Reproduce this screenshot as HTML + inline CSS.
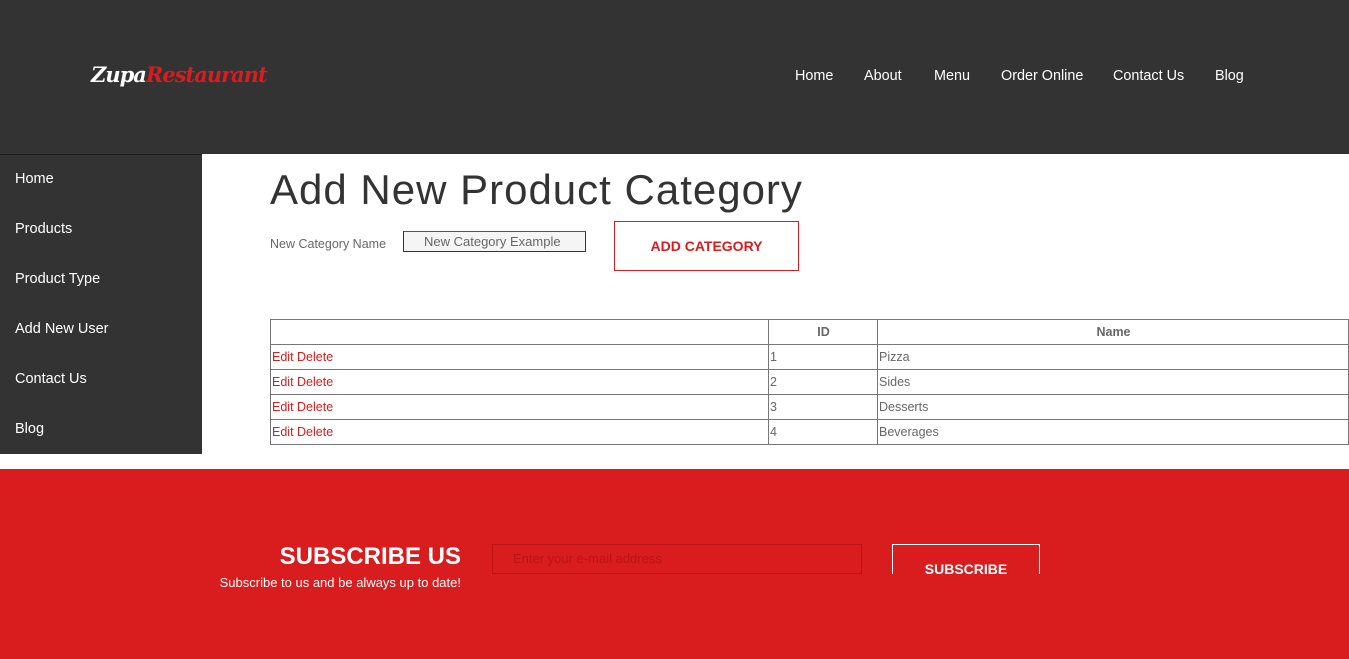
<!DOCTYPE html>
<html><head><meta charset="utf-8">
<style>
*{margin:0;padding:0;box-sizing:border-box}
body{width:1349px;height:659px;overflow:hidden;background:#fff;font-family:"Liberation Sans",sans-serif;position:relative}
.hdr{position:absolute;left:0;top:0;width:1349px;height:154px;background:#333}
.line{position:absolute;left:0;top:154px;width:202px;height:1px;background:#1e1e1e}
.logo{position:absolute;left:91px;top:62px;font-family:"DejaVu Serif",serif;font-style:italic;font-size:21px;color:#fff;letter-spacing:-1px;font-weight:bold}
.logo span{color:#d91c1e}
.nav{position:absolute;top:68px;font-size:14.4px;color:#fff}
.side{position:absolute;left:0;top:155px;width:202px;height:299px;background:#333}
.side div{position:absolute;left:15px;color:#fff;font-size:14.5px}
h1{position:absolute;left:270px;top:166px;font-weight:normal;font-size:42px;color:#333;letter-spacing:1px}
.lbl{position:absolute;left:270px;top:237px;font-size:12.5px;color:#666}
.inp{position:absolute;left:403px;top:231px;width:183px;height:21px;border:1px solid #333;background:#f5f5f5;font-size:13px;color:#666;padding-left:20px;line-height:19px;border-color:#d91c1e #333 #333 #333}
.btn{position:absolute;left:614px;top:221px;width:185px;height:50px;border:1px solid #d91c1e;color:#d91c1e;font-weight:bold;font-size:14px;text-align:center;line-height:48px}
table{position:absolute;left:270px;top:319px;width:1079px;border-collapse:collapse;font-size:12.5px;color:#666}
td,th{border:1px solid #777;height:25px;padding:0 0 0 1px;vertical-align:middle;text-align:left;font-weight:normal}
th{font-weight:bold;text-align:center}
td.r{color:#d91c1e}
.foot{position:absolute;left:0;top:469px;width:1349px;height:190px;background:#d91c1e}
.st{position:absolute;right:888px;top:543px;color:#fff;font-weight:bold;font-size:24px}
.ss{position:absolute;right:888px;top:575px;color:#fff;font-size:13px}
.em{position:absolute;left:492px;top:544px;width:370px;height:30px;border:1px solid #b81416;color:#b81416;font-size:13px;padding-left:20px;line-height:28px}
.sb{position:absolute;left:892px;top:544px;width:148px;height:30px;border:1px solid #fff;border-bottom:none;color:#fff;font-weight:bold;font-size:14px;text-align:center;padding-top:16px}
</style></head><body>
<div class="hdr"></div>
<div class="line"></div>
<div class="logo">Zupa<span>Restaurant</span></div>
<div class="nav" style="left:795px">Home</div>
<div class="nav" style="left:864px">About</div>
<div class="nav" style="left:934px">Menu</div>
<div class="nav" style="left:1001px">Order Online</div>
<div class="nav" style="left:1113px">Contact Us</div>
<div class="nav" style="left:1215px">Blog</div>
<div class="side">
<div style="top:16px">Home</div>
<div style="top:66px">Products</div>
<div style="top:116px">Product Type</div>
<div style="top:166px">Add New User</div>
<div style="top:216px">Contact Us</div>
<div style="top:266px">Blog</div>
</div>
<h1>Add New Product Category</h1>
<div class="lbl">New Category Name</div>
<div class="inp">New Category Example</div>
<div class="btn">ADD CATEGORY</div>
<table>
<tr><th style="width:498px"></th><th style="width:109px">ID</th><th>Name</th></tr>
<tr><td class="r">Edit Delete</td><td>1</td><td>Pizza</td></tr>
<tr><td class="r">Edit Delete</td><td>2</td><td>Sides</td></tr>
<tr><td class="r">Edit Delete</td><td>3</td><td>Desserts</td></tr>
<tr><td class="r">Edit Delete</td><td>4</td><td>Beverages</td></tr>
</table>
<div class="foot"></div>
<div class="st">SUBSCRIBE US</div>
<div class="ss">Subscribe to us and be always up to date!</div>
<div class="em">Enter your e-mail address</div>
<div class="sb">SUBSCRIBE</div>
</body></html>
